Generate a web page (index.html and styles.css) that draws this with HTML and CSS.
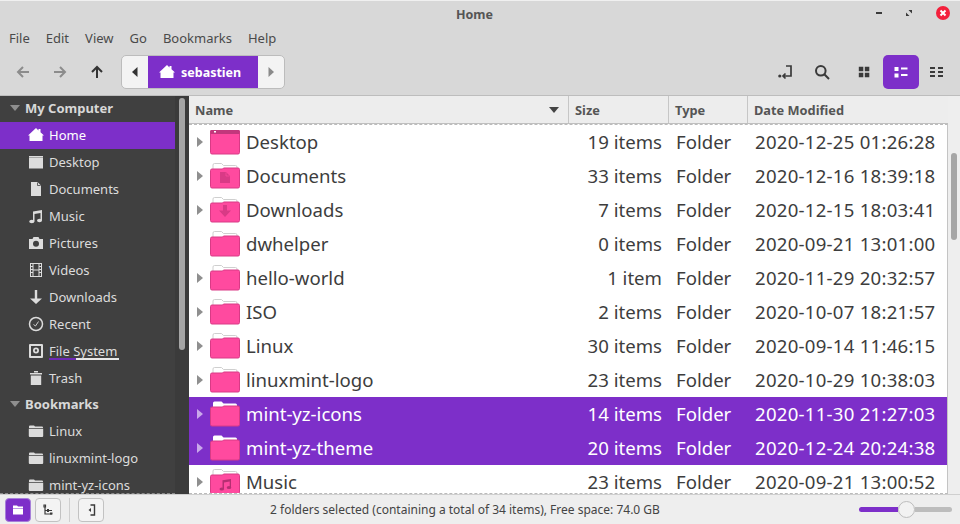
FILE: index.html
```html
<!DOCTYPE html>
<html lang="en">
<head>
<meta charset="utf-8">
<title>Home</title>
<link rel="stylesheet" href="styles.css">
</head>
<body>
<svg class="defs" aria-hidden="true">
  <symbol id="home" viewBox="0 0 16 16"><path d="M8 1 L10.500 3.400 V2 H12.500 V5.300 L16 8.500 H14.500 V14 H1.500 V8.500 H0 Z" fill="currentColor"/></symbol>
  <symbol id="desk" viewBox="0 0 16 16"><path d="M1 2h14v12.500H1z" fill="currentColor"/><path d="M1 3.200h14v.8H1z" fill="#9a9a9a"/></symbol>
  <symbol id="doc" viewBox="0 0 16 16"><path d="M3 1h6.500L13 4.500V15H3z" fill="currentColor"/><path d="M9.500 1.500v3h3" fill="none" stroke="#404040" stroke-width=".8"/></symbol>
  <symbol id="note" viewBox="0 0 16 16"><path d="M5 3.500 L14 2V12.500H12.500V5L6.500 6V13.500H5Z" fill="currentColor"/><ellipse cx="3.800" cy="13.500" rx="2.600" ry="1.700" fill="currentColor"/><ellipse cx="11.500" cy="12.500" rx="2.500" ry="1.700" fill="currentColor"/></symbol>
  <symbol id="cam" viewBox="0 0 16 16"><path fill-rule="evenodd" d="M1 4h3.500l1-2h5l1 2H15v10H1zM8 5.800a3 3 0 1 0 0 6 3 3 0 0 0 0-6z" fill="currentColor"/></symbol>
  <symbol id="film" viewBox="0 0 16 16"><path fill-rule="evenodd" d="M2 1h12v14H2zM3 2v2h1.500V2zM3 5v2h1.500V5zM3 8v2h1.500V8zM3 11v3h1.500v-3zM11.500 2v2H13V2zM11.500 5v2H13V5zM11.500 8v2H13V8zM11.500 11v3H13v-3zM5.500 2v5.500h5V2zM5.500 8.500V14h5V8.500z" fill="currentColor"/></symbol>
  <symbol id="down" viewBox="0 0 16 16"><path d="M6.800 1h2.400v8.500H14L8 15 2 9.500h4.800z" fill="currentColor"/></symbol>
  <symbol id="clock" viewBox="0 0 16 16"><circle cx="8" cy="8" r="6.500" fill="none" stroke="currentColor" stroke-width="1.500"/><path d="M5.500 8.500 7.500 10l3-4.500" fill="none" stroke="currentColor" stroke-width=".9"/></symbol>
  <symbol id="disk" viewBox="0 0 16 16"><path fill-rule="evenodd" d="M2 1h12a1 1 0 0 1 1 1v12a1 1 0 0 1-1 1H2a1 1 0 0 1-1-1V2a1 1 0 0 1 1-1zM3 3v10h10V3zM8 4.500a3 3 0 1 1 0 6 3 3 0 0 1 0-6zM8 6.300a1.200 1.200 0 1 0 0 2.400 1.200 1.200 0 0 0 0-2.400z" fill="currentColor"/></symbol>
  <symbol id="trash" viewBox="0 0 16 16"><path d="M2 3h12v1.500H2zM6 1h4v1.500H6zM2.800 5.500h10.400V15H2.800z" fill="currentColor"/></symbol>
  <symbol id="side-folder" viewBox="0 0 16 16"><path d="M1 5V3.500a1 1 0 0 1 1-1h4l1 1h7a1 1 0 0 1 1 1V5z" fill="currentColor"/><path d="M.8 5.800h14.400V13a1 1 0 0 1-1 1H1.800a1 1 0 0 1-1-1z" fill="currentColor"/></symbol>

  <symbol id="fold" viewBox="0 0 30 26">
    <path d="M3 7V2A1.500 1.500 0 0 1 4.500 .5h7l2 2h12A1.500 1.500 0 0 1 27 4V7" fill="#fff" stroke="#cfcfcf"/>
    <path d="M.5 7.500A1.500 1.500 0 0 1 2 6h10.500l1-1H28a1.500 1.500 0 0 1 1.500 1.500v17A1.500 1.500 0 0 1 28 25H2a1.500 1.500 0 0 1-1.500-1.500z" fill="#ff4a9f" stroke="#d93a86"/>
  </symbol>
  <symbol id="fold-sel" viewBox="0 0 30 26">
    <path d="M3 7V2A1.500 1.500 0 0 1 4.500 .5h7l2 2h12A1.500 1.500 0 0 1 27 4V7z" fill="#fff"/>
    <path d="M.5 7.500A1.500 1.500 0 0 1 2 6h10.500l1-1H28a1.500 1.500 0 0 1 1.500 1.500v17A1.500 1.500 0 0 1 28 25H2a1.500 1.500 0 0 1-1.500-1.500z" fill="#ff4a9f" stroke="#d93a86"/>
  </symbol>
  <symbol id="fold-desk" viewBox="0 0 30 26">
    <path d="M.5 2h29v21.500a1.500 1.500 0 0 1-1.500 1.500H2a1.500 1.500 0 0 1-1.500-1.500z" fill="#ff4a9f" stroke="#d93a86"/>
    <path d="M.5 1h29v4H.5z" fill="#c2377c"/>
    <path d="M4 2h2v1.500H4z" fill="#fff"/>
  </symbol>
  <symbol id="fold-doc" viewBox="0 0 30 26">
    <use href="#fold"/>
    <path d="M10 9h6l4 4v7H10z" fill="#d93a86"/>
    <path d="M16 9.500V13h3.500" fill="none" stroke="#ff4a9f" stroke-width=".7"/>
  </symbol>
  <symbol id="fold-down" viewBox="0 0 30 26">
    <use href="#fold"/>
    <path d="M13 8h4v5.500h4L15 20l-6-6.500h4z" fill="#d93a86"/>
  </symbol>
  <symbol id="fold-music" viewBox="0 0 30 26">
    <use href="#fold"/>
    <path d="M12.500 11.200 21 10v8.500h-1.300v-6l-5.700.9V20h-1.500z" fill="#b52f72"/>
    <ellipse cx="11.800" cy="20" rx="2.300" ry="1.500" fill="#b52f72"/>
    <ellipse cx="19" cy="18.500" rx="2.300" ry="1.500" fill="#b52f72"/>
  </symbol>
</svg>

<div class="window">
  <header class="titlebar">
    <div class="title">Home</div>
    <div class="wm">
      <svg class="wm-icon" viewBox="0 0 12 12"><path d="M3 5h6v2H3z" fill="#3a3a3a"/></svg>
      <svg class="wm-icon" viewBox="0 0 12 12"><path d="M5.500 3H9v3.500zM3 5.500 6.500 9H3z" fill="#3a3a3a"/></svg>
      <svg class="wm-close" viewBox="0 0 14 14"><circle cx="7" cy="7" r="7" fill="#f3203c"/><path d="M4.500 4.500l5 5M9.500 4.500l-5 5" stroke="#fff" stroke-width="2"/></svg>
    </div>
  </header>

  <nav class="menubar">
    <span class="menu">File</span><span class="menu">Edit</span><span class="menu">View</span><span class="menu">Go</span><span class="menu">Bookmarks</span><span class="menu">Help</span>
  </nav>

  <div class="toolbar">
    <div class="nav">
      <svg class="nav-icon dim" viewBox="0 0 16 16"><path d="M14 8H3M8 3 3 8l5 5" fill="none" stroke="currentColor" stroke-width="2"/></svg>
      <svg class="nav-icon dim" viewBox="0 0 16 16"><path d="M2 8h11M8 3l5 5-5 5" fill="none" stroke="currentColor" stroke-width="2"/></svg>
      <svg class="nav-icon" viewBox="0 0 16 16"><path d="M8 14V3M3 8l5-5 5 5" fill="none" stroke="currentColor" stroke-width="2"/></svg>
    </div>
    <div class="pathbar">
      <span class="path-end"><svg class="tri" viewBox="0 0 6 10"><path d="M5.500 0v10L0 5z" fill="#333"/></svg></span>
      <span class="crumb"><svg class="crumb-icon"><use href="#home"/></svg>sebastien</span>
      <span class="path-end right"><svg class="tri" viewBox="0 0 6 10"><path d="M.5 0v10L6 5z" fill="#8a8a8a"/></svg></span>
    </div>
    <div class="tools">
      <svg class="tool-icon bookmark-i" viewBox="0 0 16 16"><path d="M8 2h5v10H5M7.500 9.500 5 12l2.500 2.500" fill="none" stroke="#3a3a3a" stroke-width="1.700"/><circle cx="1.800" cy="12" r="1.600" fill="#3a3a3a"/></svg>
      <svg class="tool-icon search-i" viewBox="0 0 16 16"><circle cx="6.800" cy="6.800" r="4.800" fill="none" stroke="#3a3a3a" stroke-width="2"/><path d="M10.300 10.300 15 15" stroke="#3a3a3a" stroke-width="2"/></svg>
      <span class="view-btn first"><svg class="view-icon" viewBox="0 0 12 12"><path d="M1 1h4.500v4.500H1zM7 1h4.500v4.500H7zM1 7h4.500v4.500H1zM7 7h4.500v4.500H7z" fill="#3a3a3a" transform="translate(-.2 -.2)"/></svg></span>
      <span class="view-btn active"><svg class="view-icon" viewBox="0 0 14 12"><path d="M.5 1h4v4h-4zM.5 7.500h4v4h-4zM7 1.500h6.500V3.500H7zM7 8h6.500v2H7z" fill="#fff"/></svg></span>
      <span class="view-btn"><svg class="view-icon" viewBox="0 0 14 12"><path d="M0 1h5v2H0zM8 1h5v2H8zM0 5h5v2H0zM8 5h5v2H8zM0 9h5v2H0zM8 9h5v2H8z" fill="#3a3a3a"/></svg></span>
    </div>
  </div>

  <main class="body">
    <aside class="sidebar">
      <div class="side-list">
        <div class="side-head"><i class="side-tri"></i>My Computer</div>
        <div class="side-item active"><svg class="side-icon"><use href="#home"/></svg>Home</div>
        <div class="side-item"><svg class="side-icon"><use href="#desk"/></svg>Desktop</div>
        <div class="side-item"><svg class="side-icon"><use href="#doc"/></svg>Documents</div>
        <div class="side-item"><svg class="side-icon"><use href="#note"/></svg>Music</div>
        <div class="side-item"><svg class="side-icon"><use href="#cam"/></svg>Pictures</div>
        <div class="side-item"><svg class="side-icon"><use href="#film"/></svg>Videos</div>
        <div class="side-item"><svg class="side-icon"><use href="#down"/></svg>Downloads</div>
        <div class="side-item"><svg class="side-icon"><use href="#clock"/></svg>Recent</div>
        <div class="side-item"><svg class="side-icon"><use href="#disk"/></svg><span class="usage">File System</span></div>
        <div class="side-item"><svg class="side-icon"><use href="#trash"/></svg>Trash</div>
        <div class="side-head"><i class="side-tri"></i>Bookmarks</div>
        <div class="side-item"><svg class="side-icon"><use href="#side-folder"/></svg>Linux</div>
        <div class="side-item"><svg class="side-icon"><use href="#side-folder"/></svg>linuxmint-logo</div>
        <div class="side-item"><svg class="side-icon"><use href="#side-folder"/></svg>mint-yz-icons</div>
      </div>
      <div class="side-scroll"><div class="side-thumb"></div></div>
    </aside>

    <section class="files">
      <div class="table">
        <div class="thead">
          <div class="th name-th"><span>Name</span><svg class="sort" viewBox="0 0 10 6"><path d="M0 0h10L5 6z" fill="#444"/></svg></div>
          <div class="th">Size</div>
          <div class="th">Type</div>
          <div class="th">Date Modified</div>
        </div>
        <div class="tbody">
          <div class="row"><div class="c-name"><i class="exp"></i><svg class="folder"><use href="#fold-desk"/></svg>Desktop</div><div class="c-size">19 items</div><div class="c-type">Folder</div><div class="c-date">2020-12-25 01:26:28</div></div>
          <div class="row"><div class="c-name"><i class="exp"></i><svg class="folder"><use href="#fold-doc"/></svg>Documents</div><div class="c-size">33 items</div><div class="c-type">Folder</div><div class="c-date">2020-12-16 18:39:18</div></div>
          <div class="row"><div class="c-name"><i class="exp"></i><svg class="folder"><use href="#fold-down"/></svg>Downloads</div><div class="c-size">7 items</div><div class="c-type">Folder</div><div class="c-date">2020-12-15 18:03:41</div></div>
          <div class="row"><div class="c-name"><i class="exp none"></i><svg class="folder"><use href="#fold"/></svg>dwhelper</div><div class="c-size">0 items</div><div class="c-type">Folder</div><div class="c-date">2020-09-21 13:01:00</div></div>
          <div class="row"><div class="c-name"><i class="exp"></i><svg class="folder"><use href="#fold"/></svg>hello-world</div><div class="c-size">1 item</div><div class="c-type">Folder</div><div class="c-date">2020-11-29 20:32:57</div></div>
          <div class="row"><div class="c-name"><i class="exp"></i><svg class="folder"><use href="#fold"/></svg>ISO</div><div class="c-size">2 items</div><div class="c-type">Folder</div><div class="c-date">2020-10-07 18:21:57</div></div>
          <div class="row"><div class="c-name"><i class="exp"></i><svg class="folder"><use href="#fold"/></svg>Linux</div><div class="c-size">30 items</div><div class="c-type">Folder</div><div class="c-date">2020-09-14 11:46:15</div></div>
          <div class="row"><div class="c-name"><i class="exp"></i><svg class="folder"><use href="#fold"/></svg>linuxmint-logo</div><div class="c-size">23 items</div><div class="c-type">Folder</div><div class="c-date">2020-10-29 10:38:03</div></div>
          <div class="row selected"><div class="c-name"><i class="exp"></i><svg class="folder"><use href="#fold-sel"/></svg>mint-yz-icons</div><div class="c-size">14 items</div><div class="c-type">Folder</div><div class="c-date">2020-11-30 21:27:03</div></div>
          <div class="row selected"><div class="c-name"><i class="exp"></i><svg class="folder"><use href="#fold-sel"/></svg>mint-yz-theme</div><div class="c-size">20 items</div><div class="c-type">Folder</div><div class="c-date">2020-12-24 20:24:38</div></div>
          <div class="row"><div class="c-name"><i class="exp"></i><svg class="folder"><use href="#fold-music"/></svg>Music</div><div class="c-size">23 items</div><div class="c-type">Folder</div><div class="c-date">2020-09-21 13:00:52</div></div>
        </div>
      </div>
      <div class="v-scroll"><div class="v-thumb"></div></div>
    </section>
  </main>

  <footer class="statusbar">
    <div class="status-btns">
      <span class="s-btn active"><svg viewBox="0 0 12 12" class="s-icon"><path d="M1 3V1.500h4l1 1h5V4H1zM1 4.500h10V10.500H1z" fill="#fff"/></svg></span>
      <span class="s-btn"><svg viewBox="0 0 12 12" class="s-icon"><path d="M2 1h1.500v2H2zM3 3v7h7M3 6.500h7" fill="none" stroke="#3a3a3a" stroke-width="1.200"/><path d="M5 5h2v3H5zM8 8.500h2.500v2H8z" fill="#3a3a3a"/></svg></span>
      <i class="s-sep"></i>
      <span class="s-btn"><svg viewBox="0 0 12 12" class="s-icon"><path d="M5.500 1h4v10h-4" fill="none" stroke="#3a3a3a" stroke-width="1.400"/><path d="M6 4 3.500 6 6 8z" fill="#3a3a3a"/></svg></span>
    </div>
    <div class="status-text">2 folders selected (containing a total of 34 items), Free space: 74.0 GB</div>
    <div class="slider"><div class="slider-fill"></div><div class="slider-knob"></div><div class="slider-rest"></div></div>
  </footer>
</div>
</body>
</html>
```

FILE: styles.css
```css
* { box-sizing: border-box; }
html, body { margin: 0; height: 100%; }
body { font-family: "Noto Sans", "Open Sans", sans-serif; color: #3d3d3d; overflow: hidden; }
.defs { width: 0; height: 0; display: block; overflow: hidden; }
.window { width: 960px; height: 524px; display: flex; flex-direction: column; background: #d8d8d8; border-top: 1px solid #f0f0f0; overflow: hidden; }

.titlebar { height: 28px; flex: none; display: flex; align-items: center; padding: 0 10px 5px 0; }
.title { flex: 1; padding: 3px 0 0 76px; text-align: center; font-weight: 700; font-size: 12.500px; color: #555; }
.wm { display: flex; align-items: center; gap: 18px; }
.wm-icon { width: 12px; height: 12px; }
.wm-close { width: 14px; height: 14px; margin-left: 3px; }

.menubar { height: 20px; flex: none; display: flex; align-items: center; padding: 0 0 2px 9px; font-size: 13px; color: #4a4a4a; }
.menu { margin-right: 16px; }

.toolbar { height: 47px; flex: none; display: flex; align-items: center; padding: 0 5px 0 15px; border-bottom: 1px solid #bdbdbd; }
.nav { display: flex; gap: 21px; width: 106px; }
.nav-icon { width: 16px; height: 16px; color: #333; }
.nav-icon.dim { color: #8c8c8c; }
.pathbar { display: flex; height: 34px; width: 164px; border: 1px solid #bcbcbc; border-radius: 5px; background: #f3f3f3; overflow: hidden; }
.path-end { width: 26px; display: flex; align-items: center; justify-content: center; }
.tri { width: 6px; height: 10px; }
.crumb { flex: 1; background: #7d2fc9; color: #fff; display: flex; align-items: center; gap: 6px; padding-left: 11px; font-weight: 700; font-size: 12.500px; margin: -1px 0; }
.crumb-icon { width: 16px; height: 16px; }
.tools { margin-left: auto; display: flex; align-items: center; }
.tool-icon { width: 16px; height: 16px; }
.bookmark-i { margin-right: 20px; }
.search-i { margin-right: 15px; }
.view-btn { width: 36px; height: 34px; border-radius: 5px; display: flex; align-items: center; justify-content: center; }
.view-btn.first { width: 38px; }
.view-btn.active { background: #7d2fc9; }
.view-icon { width: 14px; height: 12px; }

.body { flex: 1; min-height: 0; display: flex; }
.sidebar { width: 189px; flex: none; display: flex; background: #3b3b3b; }
.side-list { width: 175px; flex: none; background: #404040; color: #dcdcdc; font-size: 13px; overflow: hidden; border-bottom: 1px dashed #8a8a8a; }
.side-head { height: 26px; display: flex; align-items: center; padding: 0 0 2px 10px; font-weight: 700; color: #d8d8d8; }
.side-tri { width: 0; height: 0; border: 5px solid transparent; border-top: 6px solid #8f8f8f; border-bottom: 0; margin-right: 5px; }
.side-item { height: 27px; display: flex; align-items: center; padding: 0 0 2px 28px; }
.side-item.active { background: #7d2fc9; color: #fff; }
.side-icon { width: 16px; height: 16px; margin-right: 5px; flex: none; }
.usage { padding: 0 2px 1px 0; line-height: 16px; background: linear-gradient(90deg, #6d2ab5 0 38%, #e8e8e8 38% 100%) no-repeat 0 100% / 100% 2px; margin-top: 2px; }
.side-scroll { width: 14px; padding: 2px 4px; }
.side-thumb { height: 252px; background: #a6a6a6; border-radius: 3px; }

.files { flex: 1; min-width: 0; display: flex; background: #eeeeee; }
.table { width: 759px; flex: none; display: flex; flex-direction: column; min-height: 0; }
.thead { height: 28px; flex: none; display: grid; grid-template-columns: 380px 100px 79px 199px; background: #ededed; border-bottom: 1px solid #bfbfbf; }
.th { display: flex; align-items: center; padding: 1px 0 0 6px; font-size: 12.800px; font-weight: 700; color: #555; border-right: 1px solid #c6c6c6; }
.th:last-child { border-right: 0; }
.name-th { justify-content: space-between; padding-right: 9px; }
.sort { width: 10px; height: 6px; }
.tbody { flex: 1; min-height: 0; overflow: hidden; background: #fff; border-top: 1px dashed #bbb; border-right: 1px solid #c4c4c4; border-bottom: 1px dashed #bbb; }
.row { height: 34px; padding-bottom: 2px; display: grid; grid-template-columns: 380px 100px 79px 199px; align-items: center; font-size: 18.600px; color: #3d3d3d; white-space: nowrap; }
.row.selected { background: #7d2fc9; color: #fff; }
.c-name { display: flex; align-items: center; padding-left: 8px; }
.exp { width: 0; height: 0; border: 5px solid transparent; border-left: 6px solid #8f8f8f; border-right: 0; margin: 2px 7px 0 0; }
.exp.none { visibility: hidden; }
.selected .exp { border-left-color: #c9a8ea; }
.folder { width: 30px; height: 26px; margin: 2px 6px 0 0; flex: none; }
.c-size { text-align: right; padding-right: 7px; }
.c-type { padding-left: 7px; }
.c-date { padding-left: 7px; letter-spacing: .25px; }
.v-scroll { flex: 1; padding: 57px 3px 0; }
.v-thumb { height: 87px; background: #a6a6a6; border-radius: 3px; }

.statusbar { height: 30px; flex: none; display: flex; align-items: center; background: #eeeeee; border-top: 1px solid #cfcfcf; padding: 0 8px 0 5px; }
.status-btns { display: flex; align-items: center; gap: 4px; width: 120px; flex: none; }
.s-btn { width: 26px; height: 24px; border: 1px solid #c2c2c2; border-radius: 4px; display: flex; align-items: center; justify-content: center; background: #f3f3f3; }
.s-btn.active { background: #7d2fc9; border-color: #a67fd9; }
.s-icon { width: 12px; height: 12px; }
.s-sep { width: 1px; height: 24px; background: #cfcfcf; margin: 0 4px; }
.status-text { flex: 1; text-align: center; padding: 0 54px 1px 0; font-size: 12px; color: #444; white-space: nowrap; }
.slider { width: 93px; flex: none; display: flex; align-items: center; }
.slider-fill { width: 39px; height: 5px; background: #7d2fc9; border-radius: 3px 0 0 3px; }
.slider-knob { width: 17px; height: 17px; flex: none; border-radius: 50%; background: #f2f2f2; border: 1px solid #bdbdbd; }
.slider-rest { flex: 1; height: 5px; background: #bdbdbd; border-radius: 0 3px 3px 0; }
```
